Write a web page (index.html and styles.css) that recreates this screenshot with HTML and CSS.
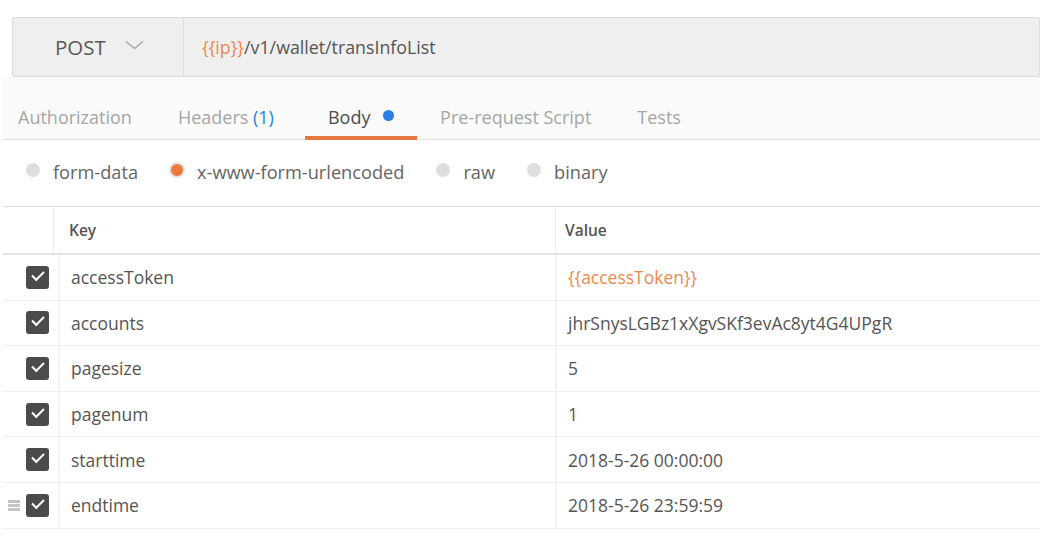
FILE: index.html
```html
<!DOCTYPE html>
<html>
<head>
<meta charset="utf-8">
<link rel="stylesheet" href="styles.css">
</head>
<body>
<div class="page">
  <div class="urlbar">
    <div class="method">
      <span>POST</span>
      <svg class="chev" width="19" height="10" viewBox="0 0 19 10"><path d="M1 1.5 L9.5 8.5 L18 1.5" fill="none" stroke="#a8a8a8" stroke-width="1.6"/></svg>
    </div>
    <div class="url"><span class="var">{{ip}}</span>/v1/wallet/transInfoList</div>
  </div>

  <div class="tabs">
    <div class="tab">Authorization</div>
    <div class="tab">Headers <span class="count">(1)</span></div>
    <div class="tab active">Body <span class="dot"></span></div>
    <div class="tab">Pre-request Script</div>
    <div class="tab">Tests</div>
  </div>

  <div class="modes">
    <label class="opt"><span class="radio"></span>form-data</label>
    <label class="opt"><span class="radio on"></span>x-www-form-urlencoded</label>
    <label class="opt"><span class="radio"></span>raw</label>
    <label class="opt"><span class="radio"></span>binary</label>
  </div>

  <div class="table">
    <div class="row head">
      <div class="c0"></div>
      <div class="c1">Key</div>
      <div class="c2">Value</div>
    </div>
    <div class="row">
      <div class="c0"><span class="cb"></span></div>
      <div class="c1">accessToken</div>
      <div class="c2 var">{{accessToken}}</div>
    </div>
    <div class="row">
      <div class="c0"><span class="cb"></span></div>
      <div class="c1">accounts</div>
      <div class="c2">jhrSnysLGBz1xXgvSKf3evAc8yt4G4UPgR</div>
    </div>
    <div class="row">
      <div class="c0"><span class="cb"></span></div>
      <div class="c1">pagesize</div>
      <div class="c2">5</div>
    </div>
    <div class="row">
      <div class="c0"><span class="cb"></span></div>
      <div class="c1">pagenum</div>
      <div class="c2">1</div>
    </div>
    <div class="row">
      <div class="c0"><span class="cb"></span></div>
      <div class="c1">starttime</div>
      <div class="c2">2018-5-26 00:00:00</div>
    </div>
    <div class="row">
      <div class="c0"><span class="handle"></span><span class="cb"></span></div>
      <div class="c1">endtime</div>
      <div class="c2">2018-5-26 23:59:59</div>
    </div>
  </div>
</div>
</body>
</html>
```

FILE: styles.css
```css
html, body {
  margin: 0;
  padding: 0;
  background: #ffffff;
}
body {
  font-family: "Open Sans", "Liberation Sans", sans-serif;
  color: #555555;
  font-size: 17.5px;
}
.page {
  padding: 17px 18px 0 3px;
}

/* URL bar */
.urlbar {
  margin-left: 9px;
  height: 60px;
  box-sizing: border-box;
  display: flex;
  background: #efefef;
  border: 1px solid #dddddd;
  border-radius: 2px;
}
.method {
  width: 171px;
  box-sizing: border-box;
  border-right: 1px solid #dddddd;
  display: flex;
  align-items: center;
  padding-left: 42px;
  gap: 19px;
  font-size: 20.5px;
  color: #595959;
}
.chev {
  margin-top: -4px;
}
.url {
  display: flex;
  align-items: center;
  padding-left: 18px;
  color: #555555;
  font-size: 17.8px;
}
.var {
  color: #f0894e;
}

/* Tabs */
.tabs {
  display: flex;
  height: 63px;
  box-sizing: border-box;
  background: #fafafa;
  border-bottom: 1px solid #e0e0e0;
}
.tab {
  position: relative;
  display: flex;
  align-items: center;
  padding: 17px 23px 0;
  font-size: 18px;
  color: #a6a6a6;
  white-space: pre;
}
.tab:first-child {
  padding-left: 15px;
}
.tab .count {
  color: #2d7fe0;
}
.tab.active {
  color: #4d4d4d;
  margin-left: 8px;
}
.tab.active::after {
  content: "";
  position: absolute;
  left: 0;
  right: 0;
  bottom: -1px;
  height: 4px;
  background: #e5793f;
}
.dot {
  display: inline-block;
  width: 11px;
  height: 11px;
  border-radius: 50%;
  background: #2c7ce6;
  margin-left: 8px;
  margin-bottom: 2px;
}

/* Body modes */
.modes {
  display: flex;
  align-items: center;
  height: 66px;
  box-sizing: border-box;
  padding: 0 0 2px 23px;
  gap: 32px;
}
.opt {
  display: flex;
  align-items: center;
  gap: 13px;
  font-size: 18.2px;
  color: #656565;
}
.radio {
  width: 14px;
  height: 14px;
  border-radius: 50%;
  background: #dedede;
  margin-top: -5px;
}
.radio.on {
  background: #ed7a3c;
  box-shadow: 0 0 0 2px #e2e2e2;
  width: 12px;
  height: 12px;
  margin-left: 1px;
  margin-right: 1px;
}

/* Table */
.table {
  border-top: 1px solid #e0e0e0;
}
.row {
  display: grid;
  grid-template-columns: 55px 497px 1fr;
  height: 45.6px;
  box-sizing: border-box;
  border-bottom: 1px solid #efefef;
}
.row.head {
  height: 48px;
  grid-template-columns: 50px 502px 1fr;
  border-bottom: 2px solid #e4e4e4;
  font-size: 15.5px;
  font-weight: 600;
  color: #555555;
}
.row > div {
  display: flex;
  align-items: center;
}
.c1, .c2 {
  padding-left: 11px;
  border-left: 2px solid #f3f3f3;
}
.row.head .c1, .row.head .c2 {
  border-left: 1px solid #ececec;
}
.row.head .c1 {
  padding-left: 15px;
}
.row.head .c2 {
  padding-left: 9px;
}
.c0 {
  position: relative;
  padding-left: 23px;
}
.cb {
  position: relative;
  width: 23px;
  height: 23px;
  border-radius: 3px;
  background: #4b4b4b;
}
.cb::after {
  content: "";
  position: absolute;
  left: 6px;
  top: 5px;
  width: 10px;
  height: 5px;
  border-left: 2.5px solid #ffffff;
  border-bottom: 2.5px solid #ffffff;
  transform: rotate(-45deg);
}
.handle {
  position: absolute;
  left: 5px;
  top: 17px;
  width: 12px;
  height: 3px;
  background: #c4c4c4;
  box-shadow: 0 4px 0 #c4c4c4, 0 8px 0 #c4c4c4;
}
```
